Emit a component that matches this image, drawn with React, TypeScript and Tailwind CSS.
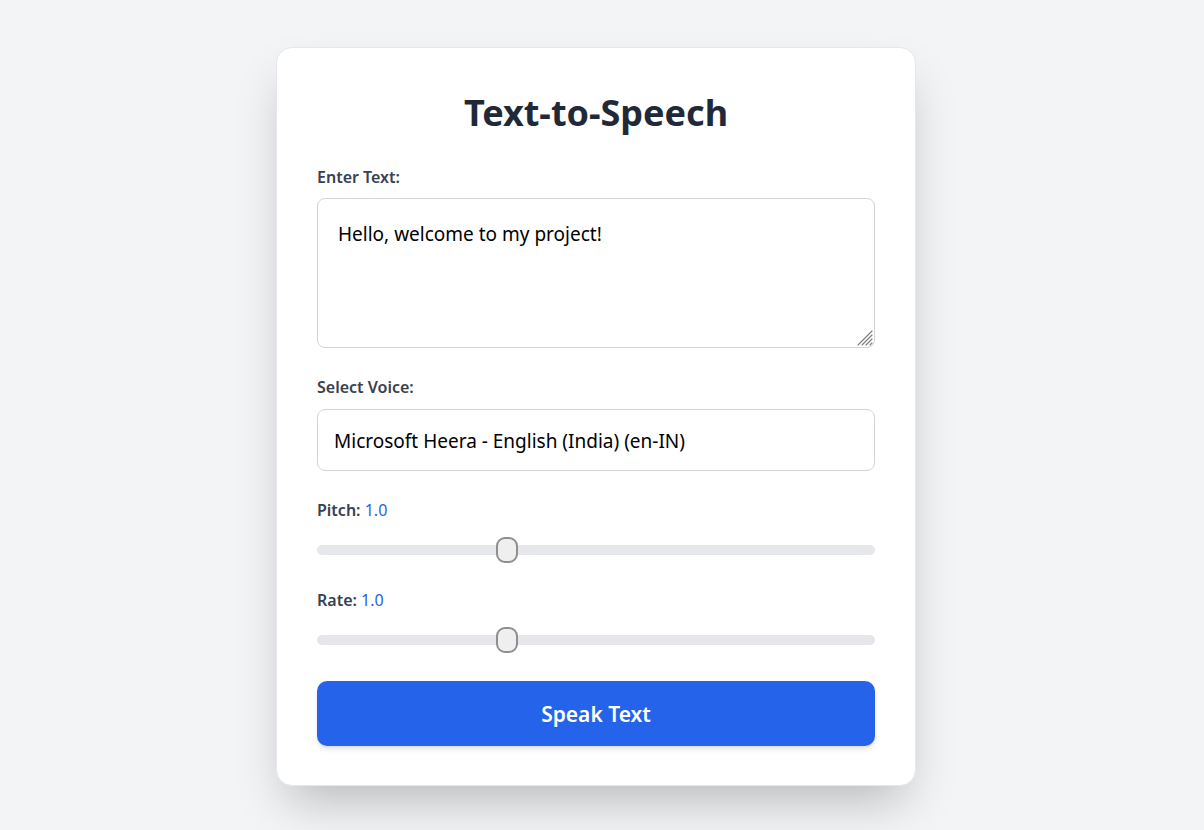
import React from "react";

const FONT = { fontFamily: '"Noto Sans", "Open Sans", sans-serif' };

function Slider({ value, min, max }: { value: number; min: number; max: number }) {
  const pct = (value - min) / (max - min);
  return (
    <div className="relative h-[26px] flex items-center">
      <div className="w-full h-[10px] rounded-full bg-[#e5e7eb]" />
      <div
        className="absolute top-0 w-[22px] h-[26px] rounded-[9px] border-2 border-[#8f8f8f] bg-[#efefef]"
        style={{ left: `calc(${pct} * (100% - 22px))` }}
      />
    </div>
  );
}

export default function App() {
  return (
    <div className="min-h-[830px] bg-[#f3f4f6] flex justify-center pt-[47px] pr-[12px]" style={FONT}>
      <div className="w-[640px] h-[739px] bg-white rounded-2xl border border-[#e5e7eb] shadow-2xl px-10 pt-10 flex flex-col">
        <h1 className="mt-[5px] text-[36px] leading-10 font-bold text-[#1f2937] text-center mb-[32px]">
          Text-to-Speech
        </h1>

        <label className="block text-[16px] leading-6 font-semibold text-[#374151] mb-[9px]">Enter Text:</label>
        <div className="relative mb-[27px]">
          <textarea
            className="block w-full h-[150px] border border-[#d1d5db] rounded-lg pl-5 pr-5 pt-[21px] text-[19px] leading-7 text-black outline-none resize-none"
            defaultValue="Hello, welcome to my project!"
            style={FONT}
          />
          <svg
            className="absolute right-[2px] bottom-[2px] w-[16px] h-[16px] pointer-events-none"
            viewBox="0 0 16 16"
          >
            <g stroke="#7a7a7a" strokeWidth="1.1" strokeLinecap="round">
              <line x1="1" y1="15" x2="15" y2="1" />
              <line x1="5" y1="15" x2="15" y2="5" />
              <line x1="9" y1="15" x2="15" y2="9" />
              <line x1="13" y1="15" x2="15" y2="13" />
            </g>
          </svg>
        </div>

        <label className="block text-[16px] leading-6 font-semibold text-[#374151] mb-[10px]">Select Voice:</label>
        <select
          className="block w-full h-[62px] border border-[#d1d5db] rounded-lg pl-4 pt-[3px] text-[19px] text-black appearance-none bg-white mb-[27px] outline-none"
          style={FONT}
          defaultValue="heera"
        >
          <option value="heera">Microsoft Heera - English (India) (en-IN)</option>
        </select>

        <div className="text-[16px] leading-6 text-[#374151]">
          <span className="font-semibold">Pitch:</span> <span className="text-[#2563eb]">1.0</span>
        </div>
        <div className="mt-[15px] mb-[25px]">
          <Slider value={1.0} min={0.5} max={2} />
        </div>

        <div className="text-[16px] leading-6 text-[#374151]">
          <span className="font-semibold">Rate:</span> <span className="text-[#2563eb]">1.0</span>
        </div>
        <div className="mt-[15px]">
          <Slider value={1.0} min={0.5} max={2} />
        </div>

        <button
          className="mt-[28px] w-full h-[65px] pt-[3px] rounded-[10px] bg-[#2563eb] text-white text-[21px] font-semibold shadow-md"
          style={FONT}
        >
          Speak Text
        </button>
      </div>
    </div>
  );
}
